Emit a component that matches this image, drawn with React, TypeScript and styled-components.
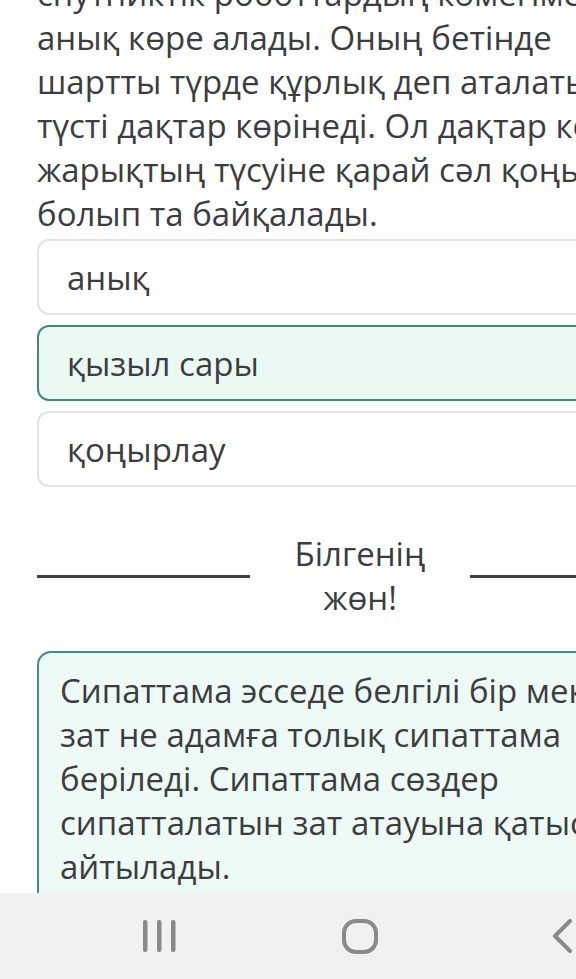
import styled, { createGlobalStyle } from "styled-components";

const GlobalStyle = createGlobalStyle`
  html, body {
    margin: 0;
    padding: 0;
    background: #ffffff;
    overflow: hidden;
  }
  body {
    font-family: "Open Sans", "Noto Sans", sans-serif;
    color: #3b3d3f;
  }
`;

const Page = styled.div`
  width: 646px;
  padding: 0 0 120px 37px;
  display: flex;
  flex-direction: column;
`;

const Passage = styled.div`
  margin-top: -28px;
  font-size: 33px;
  line-height: 44px;
`;

const Line = styled.span`
  display: block;
  white-space: nowrap;
`;

const Options = styled.div`
  margin-top: 3px;
  display: flex;
  flex-direction: column;
  gap: 10px;
`;

const Option = styled.div<{ $picked?: boolean }>`
  box-sizing: border-box;
  height: 76px;
  display: flex;
  align-items: center;
  padding-left: 28px;
  border-radius: 12px;
  border: 2px solid ${(p) => (p.$picked ? "#3f8a7a" : "#e3e3e3")};
  background: ${(p) => (p.$picked ? "#ebf9f3" : "#ffffff")};
  font-size: 33px;
  white-space: nowrap;
`;

const Divider = styled.div`
  margin-top: 45px;
  display: flex;
  align-items: center;
`;

const Rule = styled.div`
  flex: 1;
  height: 3px;
  background: #3d3f41;
`;

const DividerText = styled.div`
  width: 220px;
  text-align: center;
  font-size: 33px;
  line-height: 44px;
`;

const InfoBox = styled.div`
  margin-top: 31px;
  border: 2px solid #408e89;
  border-radius: 14px;
  background: #eefaf5;
  padding: 16px 21px 40px;
  font-size: 33px;
  line-height: 44px;
`;

const NavBar = styled.div`
  position: fixed;
  left: 0;
  right: 0;
  bottom: 0;
  height: 86px;
  background: #f1f1f1;
  display: flex;
  align-items: center;
  padding-left: 143px;
  box-sizing: border-box;
`;

const NavIcon = styled.svg<{ $gap?: number }>`
  display: block;
  flex-shrink: 0;
  margin-left: ${(p) => p.$gap ?? 0}px;
  color: #8a8a8a;
`;

const passage = [
  "спутниктік роботтардың көмегімен",
  "анық көре алады. Оның бетінде",
  "шартты түрде құрлық деп аталатын",
  "түсті дақтар көрінеді. Ол дақтар көбіне",
  "жарықтың түсуіне қарай сәл қоңырлау",
  "болып та байқалады.",
];

const info = [
  "Сипаттама эсседе белгілі бір мекен,",
  "зат не адамға толық сипаттама",
  "беріледі. Сипаттама сөздер",
  "сипатталатын зат атауына қатысты",
  "айтылады.",
];

const options = ["анық", "қызыл сары", "қоңырлау"];

export default function App() {
  return (
    <>
      <GlobalStyle />
      <Page>
        <Passage>
          {passage.map((l) => (
            <Line key={l}>{l}</Line>
          ))}
        </Passage>
        <Options>
          {options.map((o) => (
            <Option key={o} $picked={o === "қызыл сары"}>
              {o}
            </Option>
          ))}
        </Options>
        <Divider>
          <Rule />
          <DividerText>
            Білгенің
            <br />
            жөн!
          </DividerText>
          <Rule />
        </Divider>
        <InfoBox>
          {info.map((l) => (
            <Line key={l}>{l}</Line>
          ))}
        </InfoBox>
      </Page>
      <NavBar>
        <NavIcon width="33" height="32" viewBox="0 0 33 32">
          <g fill="currentColor">
            <rect x="0" y="0" width="4.5" height="32" rx="2" />
            <rect x="14" y="0" width="4.5" height="32" rx="2" />
            <rect x="28" y="0" width="4.5" height="32" rx="2" />
          </g>
        </NavIcon>
        <NavIcon $gap={166} width="36" height="35" viewBox="0 0 36 35">
          <rect x="2" y="2" width="32" height="31" rx="12" fill="none" stroke="currentColor" strokeWidth="4" />
        </NavIcon>
        <NavIcon $gap={173} width="24" height="34" viewBox="0 0 24 34">
          <path d="M19 2 L4 17 L19 32" fill="none" stroke="currentColor" strokeWidth="4" strokeLinecap="round" strokeLinejoin="round" />
        </NavIcon>
      </NavBar>
    </>
  );
}
